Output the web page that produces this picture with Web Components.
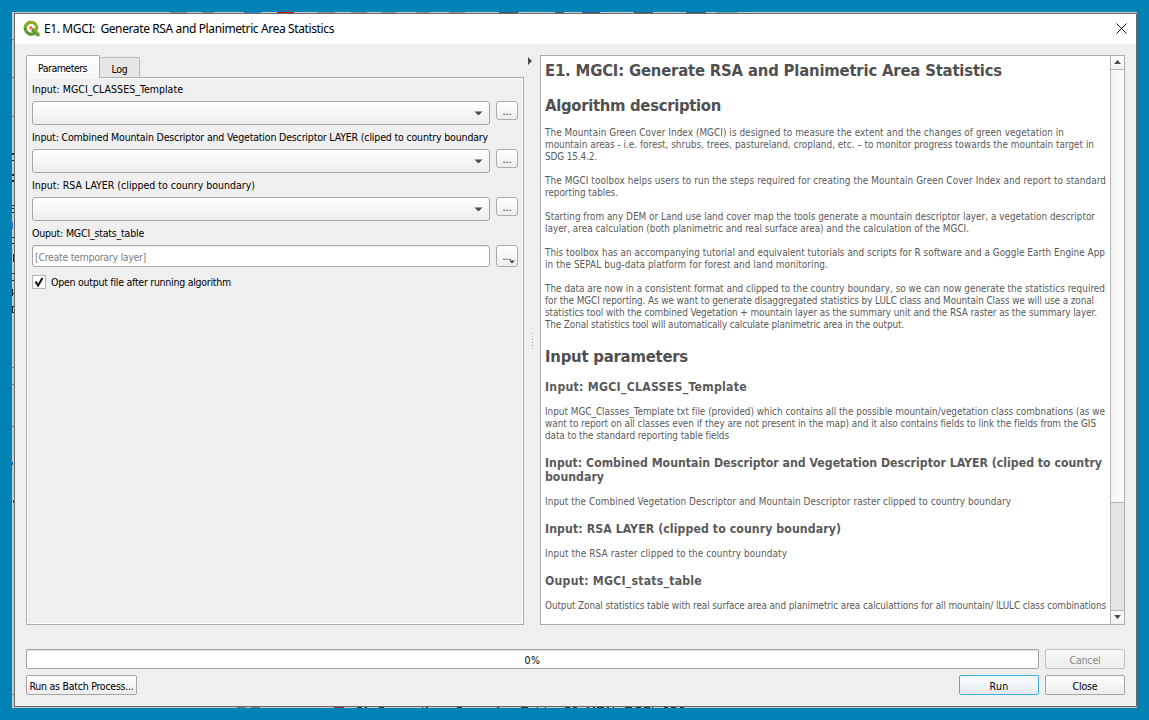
<!DOCTYPE html>
<html lang="en">
<head>
<meta charset="utf-8">
<title>E1. MGCI: Generate RSA and Planimetric Area Statistics</title>
<style>
html,body{margin:0;height:100%;overflow:hidden;background:#0082b4}
body{font-family:"DejaVu Sans Condensed","DejaVu Sans",sans-serif;font-stretch:condensed;font-size:10.5px;color:#000}
</style>
</head>
<body>
<alg-desktop>
  <alg-dialog>
    <fit-text slot="title" w="290">E1. MGCI:&nbsp; Generate RSA and Planimetric Area Statistics</fit-text>
    <alg-tabs slot="left">
      <fit-text slot="active" w="49">Parameters</fit-text>
      <fit-text slot="other" w="16">Log</fit-text>
      <param-row><fit-text w="151">Input: MGCI_CLASSES_Template</fit-text></param-row>
      <param-row><fit-text w="456">Input: Combined Mountain Descriptor and Vegetation Descriptor LAYER (cliped to country boundary</fit-text></param-row>
      <param-row><fit-text w="223">Input: RSA LAYER (clipped to counry boundary)</fit-text></param-row>
      <param-row kind="edit"><fit-text w="112">Ouput: MGCI_stats_table</fit-text><fit-text slot="value" w="111">[Create temporary layer]</fit-text></param-row>
      <check-box><fit-text w="180">Open output file after running algorithm</fit-text></check-box>
    </alg-tabs>
    <help-pane slot="right">
      <help-block kind="h1" style="margin-top:5px"><fit-text w="457">E1. MGCI: Generate RSA and Planimetric Area Statistics</fit-text></help-block>
      <help-block kind="h1" style="margin-top:15px"><fit-text w="176">Algorithm description</fit-text></help-block>
      <help-block style="margin-top:11px">
        <fit-text w="519">The Mountain Green Cover Index (MGCI) is designed to measure the extent and the changes of green vegetation in</fit-text>
        <fit-text w="549">mountain areas - i.e. forest, shrubs, trees, pastureland, cropland, etc. – to monitor progress towards the mountain target in</fit-text>
        <fit-text w="52">SDG 15.4.2.</fit-text>
      </help-block>
      <help-block>
        <fit-text w="561">The MGCI toolbox helps users to run the steps required for creating the Mountain Green Cover Index and report to standard</fit-text>
        <fit-text w="73">reporting tables.</fit-text>
      </help-block>
      <help-block>
        <fit-text w="550">Starting from any DEM or Land use land cover map the tools generate a mountain descriptor layer, a vegetation descriptor</fit-text>
        <fit-text w="424">layer, area calculation (both planimetric and real surface area) and the calculation of the MGCI.</fit-text>
      </help-block>
      <help-block>
        <fit-text w="560">This toolbox has an accompanying tutorial and equivalent tutorials and scripts for R software and a Goggle Earth Engine App</fit-text>
        <fit-text w="283">in the SEPAL bug-data platform for forest and land monitoring.</fit-text>
      </help-block>
      <help-block>
        <fit-text w="560">The data are now in a consistent format and clipped to the country boundary, so we can now generate the statistics required</fit-text>
        <fit-text w="549">for the MGCI reporting. As we want to generate disaggregated statistics by LULC class and Mountain Class we will use a zonal</fit-text>
        <fit-text w="552">statistics tool with the combined Vegetation + mountain layer as the summary unit and the RSA raster as the summary layer.</fit-text>
        <fit-text w="359">The Zonal statistics tool will automatically calculate planimetric area in the output.</fit-text>
      </help-block>
      <help-block kind="h1" style="margin-top:16px"><fit-text w="143">Input parameters</fit-text></help-block>
      <help-block kind="h3" style="margin-top:13px"><fit-text w="202">Input: MGCI_CLASSES_Template</fit-text></help-block>
      <help-block>
        <fit-text w="560">Input MGC_Classes_Template txt file (provided) which contains all the possible mountain/vegetation class combnations (as we</fit-text>
        <fit-text w="551">want to report on all classes even if they are not present in the map) and it also contains fields to link the fields from the GIS</fit-text>
        <fit-text w="184">data to the standard reporting table fields</fit-text>
      </help-block>
      <help-block kind="h3"><fit-text w="557">Input: Combined Mountain Descriptor and Vegetation Descriptor LAYER (cliped to country</fit-text><fit-text w="59">boundary</fit-text></help-block>
      <help-block><fit-text w="466">Input the Combined Vegetation Descriptor and Mountain Descriptor raster clipped to country boundary</fit-text></help-block>
      <help-block kind="h3"><fit-text w="296">Input: RSA LAYER (clipped to counry boundary)</fit-text></help-block>
      <help-block><fit-text w="242">Input the RSA raster clipped to the country boundaty</fit-text></help-block>
      <help-block kind="h3"><fit-text w="157">Ouput: MGCI_stats_table</fit-text></help-block>
      <help-block><fit-text w="561">Output Zonal statistics table with real surface area and planimetric area calculattions for all mountain/ lLULC class combinations</fit-text></help-block>
    </help-pane>
    <fit-text slot="progress" w="16">0%</fit-text>
    <push-button slot="cancel" disabled><fit-text w="31">Cancel</fit-text></push-button>
    <push-button slot="batch" style="width:111px"><fit-text w="104">Run as Batch Process...</fit-text></push-button>
    <push-button slot="run" primary><fit-text w="19">Run</fit-text></push-button>
    <push-button slot="close"><fit-text w="25">Close</fit-text></push-button>
  </alg-dialog>
</alg-desktop>
<script>
const fits = [];
function define(name, html, after) {
  customElements.define(name, class extends HTMLElement {
    constructor() {
      super();
      this.attachShadow({mode: 'open'}).innerHTML = html.trim();
    }
    connectedCallback() { if (after) after(this); }
  });
}

define('alg-desktop', `
<style>
:host{display:block;position:relative;box-sizing:border-box;width:1149px;height:720px;padding:13px 12px 13px 14px;background:#0082b4}
.behind{position:absolute;left:0;top:0}
</style>
<svg class="behind" width="1149" height="720" shape-rendering="crispEdges">
  <rect x="12" y="12" width="1125" height="696" fill="#c9c9c9"/>
  <path d="M12 39h2M12 77h2M12 116h2M12 367h2M12 384h2M12 426h2M12 694h2" stroke="#8e8e8e"/>
  <path d="M170 12.5h17M202 12.5h12M318 12.5h17M351 12.5h16M382 12.5h14M416 12.5h14M449 12.5h16" stroke="#958b82"/>
  <path d="M244 12.5h17" stroke="#3f78d0"/><path d="M277 12.5h17" stroke="#e00000"/>
  <path d="M499 12.5h19M555 12.5h9M582 12.5h18M634 12.5h19M686 12.5h20" stroke="#3b587c"/>
  <path d="M716 12.5h21" stroke="#7c9fa3"/>
  <g fill="#222"><path d="M12 153h2v2h-2zM12 160h2v1h-2zM12 174h2v2h-2zM12 180h2v2h-2zM12 205h2v1h-2zM12 208h2v1h-2zM12 212h2v1h-2zM12 237h2v1h-2zM12 243h2v1h-2zM13 254h1v8h-1zM12 273h2v1h-2zM12 280h2v1h-2zM12 289h1v7h-1zM12 293h2v1h-2zM12 306h1v7h-1zM12 306h2v1h-2zM12 312h2v1h-2z"/></g>
  <rect x="12" y="222" width="1" height="7" fill="#4774c8"/>
  <rect x="12" y="462" width="1" height="3" fill="#1b6cb5"/><rect x="13" y="500" width="1" height="3" fill="#5a4630"/>
  <path d="M237 707.500h9M251 707.500h9" stroke="#777"/><path d="M334 707.500h10" stroke="#a02c38"/>
  <path d="M357 707.500h5M365 707.500h2M379 707.500h5M422 707.500h1M426 707.500h2M457 707.500h5M497 707.500h2M521 707.500h7M537 707.500h1M545 707.500h1M565 707.500h5M573 707.500h4M587 707.500h2M593 707.500h2M597 707.500h7M607 707.500h2M613 707.500h1M625 707.500h7M636 707.500h5M644 707.500h6M652 707.500h1M664 707.500h4M671 707.500h5M680 707.500h4" stroke="#333"/>
</svg>
<slot></slot>`);

/* One line of text, tracked out or in to a given width. */
define('fit-text', `<style>:host{display:block;width:max-content}span{display:block;white-space:pre}</style><span><slot></slot></span>`, el => {
  fits.push(() => {
    const natural = el.getBoundingClientRect().width;
    el.style.letterSpacing = ((el.getAttribute('w') - natural) / el.textContent.length).toFixed(4) + 'px';
  });
});

define('alg-dialog', `
<style>
:host{display:flex;flex-direction:column;position:relative;box-sizing:border-box;width:1123px;height:694px;border:1px solid #6b6b6b;background:#efefef}
header{display:flex;align-items:center;height:30px;background:#fff;font:12px "Noto Sans",sans-serif;padding:0 0 1px 8px;box-sizing:border-box}
header svg.logo{margin-right:4px}
header svg.x{margin-left:auto;margin-right:9px}
main{display:flex;height:570px;padding:11px 11px 0}
.split{width:16px}
.split svg{display:block}
.row{display:flex;margin:0 11px;gap:6px}
.p{margin-top:24px}
.b{margin-top:6px}
.bar{flex:1;height:20px;box-sizing:border-box;border:1px solid #a3a3a3;border-radius:2px;background:#fff;box-shadow:inset 0 1px #e8e8e8;display:flex;align-items:center;justify-content:center;padding-top:1px}
.sp{flex:1}
</style>
<header>
  <svg class="logo" width="17" height="17" viewBox="0 0 17 17">
    <path d="M8 2.2A6 6 0 1 0 11.2 13.4" fill="none" stroke="#589632" stroke-width="3"/>
    <path d="M8 2.2A6 6 0 0 0 2.200 8M8 2.2A6 6 0 0 1 13.6 10" fill="none" stroke="#8aae2a" stroke-width="3"/>
    <path d="M8.5 8.5l3-.3 5 5.3v2.7h-3l-5-5z" fill="#589632"/><path d="M10.5 9.5l5.5 5.5" stroke="#93b023" stroke-width="1.2"/>
    <circle cx="7.8" cy="7.8" r="1.8" fill="#f07f3c"/>
  </svg>
  <slot name="title"></slot>
  <svg class="x" width="11" height="11"><path d="M.5 .5l10 10M10.500 .5l-10 10" stroke="#111" stroke-width="1"/></svg>
</header>
<main>
  <slot name="left"></slot>
  <div class="split">
    <svg width="16" height="570"><path d="M4 2l4 4-4 4z" fill="#4d4d4d"/><path d="M8.500 278v16" stroke="#aaa" stroke-dasharray="1 2"/></svg>
  </div>
  <slot name="right"></slot>
</main>
<div class="row p"><div class="bar"><slot name="progress"></slot></div><slot name="cancel"></slot></div>
<div class="row b"><slot name="batch"></slot><div class="sp"></div><slot name="run"></slot><slot name="close"></slot></div>`);

define('alg-tabs', `
<style>
:host{display:flex;flex-direction:column;width:498px;height:570px}
nav{display:flex;height:22px;align-items:flex-end;position:relative;z-index:1}
.t{box-sizing:border-box;display:flex;align-items:center;justify-content:center;border:1px solid #adadad;border-bottom:0;border-radius:2px 2px 0 0}
.on{width:74px;height:23px;margin-bottom:-1px;padding:1px 1px 0 0;background:linear-gradient(#fff,#f6f6f6)}
.off{width:40px;height:20px;background:#e6e6e6;border-left:0;padding-top:2px;border-color:#bbb}
.page{flex:1;box-sizing:border-box;border:1px solid #adadad;box-shadow:inset 1px 1px #f9f9f9,inset -1px -1px #f9f9f9;padding:4px 5px 0}
</style>
<nav><div class="t on"><slot name="active"></slot></div><div class="t off"><slot name="other"></slot></div></nav>
<div class="page"><slot></slot></div>`);

define('param-row', `
<style>
:host{display:block;height:48px}
.l{height:14px;line-height:14px;margin-bottom:5px}
.r{display:flex;gap:6px;align-items:flex-start}
.f{box-sizing:border-box;width:458px;height:24px;border:1px solid #a6a6a6;border-radius:3px;background:linear-gradient(#fff,#ececec);display:flex;align-items:center;justify-content:flex-end;padding-right:6px}
.m{box-sizing:border-box;width:22px;height:19px;border:1px solid #ababab;border-radius:3px;background:linear-gradient(#fff,#eee);position:relative;display:flex;justify-content:center;line-height:19px}
.m svg{display:none;position:absolute;right:2px;bottom:2px}
:host([kind=edit]) .f{height:22px;background:#fff;justify-content:flex-start;padding:1px 0 0 2px;color:#808080;box-shadow:inset 0 1px #e9e9e9}
:host([kind=edit]) .f svg{display:none}
:host([kind=edit]) .m{height:22px;line-height:21px}
:host([kind=edit]) .m svg{display:block}
</style>
<div class="l"><slot></slot></div>
<div class="r"><div class="f"><slot name="value"></slot><svg width="9" height="5"><path d="M.5 .5h8L4.500 4.500z" fill="#4d4d4d"/></svg></div>
<div class="m">...<svg width="6" height="4"><path d="M0 .5h6L3 3.500z" fill="#4d4d4d"/></svg></div></div>`);

define('check-box', `
<style>
:host{display:flex;align-items:center;height:14px;gap:5px;line-height:14px;margin-top:1px}
.c{box-sizing:border-box;width:14px;height:14px;border:1px solid #b4b4b4;background:#fff}
svg{display:block}
</style>
<div class="c"><svg width="12" height="12"><path d="M2.500 5.500l2.500 4L9.500 2" fill="none" stroke="#111" stroke-width="2"/></svg></div><slot></slot>`);

define('help-pane', `
<style>
:host{display:flex;box-sizing:border-box;width:585px;height:570px;border:1px solid #adadad;background:#fff;color:#5a5a5a}
.doc{flex:1;padding-left:4px;min-width:0}
.sb{width:14px;box-sizing:border-box;border-left:1px solid #b4b4b4;display:flex;flex-direction:column;background:#e3e3e3}
.a{height:12px;padding-bottom:1px;background:linear-gradient(#fff,#f1f1f1);display:flex;align-items:center;justify-content:center}
.th{height:434px;box-sizing:border-box;border:solid #b4b4b4;border-width:1px 0;background:linear-gradient(90deg,#f2f2f2,#fff)}
.g{flex:1;border-bottom:1px solid #b4b4b4}
</style>
<div class="doc"><slot></slot></div>
<div class="sb"><div class="a"><svg width="7" height="4"><path d="M0 4h7L3.500 0z" fill="#4d4d4d"/></svg></div><div class="th"></div><div class="g"></div><div class="a"><svg width="7" height="4"><path d="M0 0h7L3.500 4z" fill="#4d4d4d"/></svg></div></div>`);

define('help-block', `
<style>
:host{display:block;margin-top:12px;font-size:9.900px;line-height:12px}
:host([kind=h1]){font-size:16.500px;line-height:20px;font-weight:bold;color:#505050}
:host([kind=h3]){font-size:12.200px;line-height:14px;font-weight:bold;margin-top:14px;color:#5a5a5a}
</style><slot></slot>`);

define('push-button', `
<style>
:host{display:flex;box-sizing:border-box;width:80px;height:20px;padding-top:1px;align-items:center;justify-content:center;border:1px solid #a6a6a6;border-radius:2px;background:linear-gradient(#fff,#ececec)}
:host([disabled]){color:#8a8a8a;border-color:#c2c2c2;background:linear-gradient(#f8f8f8,#ececec)}
:host([primary]){border-color:#3daee9;background:linear-gradient(#fcfdfe,#e2e8ee)}
</style><slot></slot>`);

fits.forEach(fit => fit());
</script>
</body>
</html>
